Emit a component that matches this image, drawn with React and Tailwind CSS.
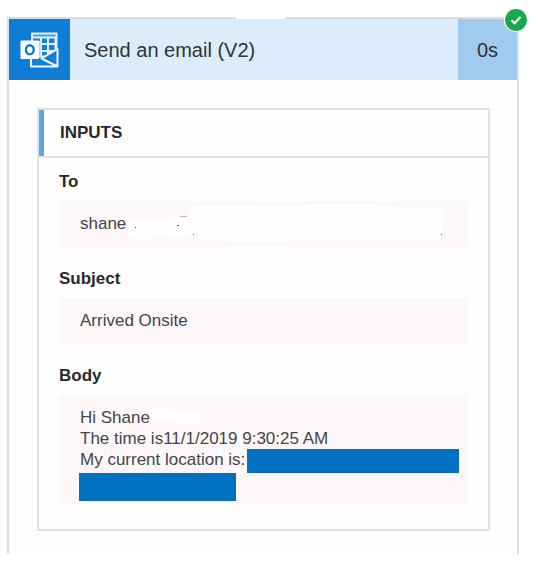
function OutlookIcon() {
  return (
    <svg viewBox="0 0 40 38" className="h-[38px] w-10" fill="none" aria-hidden="true">
      <rect x="11" y="1.500" width="26.500" height="25" rx="1" fill="#e4effb" />
      <path d="M13 3.500h22.500v2H13z" fill="#4c9ee2" />
      <path
        d="M13 7.500h7v2.500h-7z M22 7.500h5v4.500h-5z M29 7.500h5.500v4.500H29z M22 14h5v5h-5z M29 14h5.500v5H29z M22 21h5v3.500h-5z"
        fill="#1280d6"
      />
      <path d="M18.500 11h2v16h-2z" fill="#bcd3ea" />
      <path d="M10 28h12l15.500-9.500V36H10z" fill="#1280d6" />
      <path
        d="M11 27v8.500h26.500V18L21.500 27.500l16 8"
        stroke="#eef5fc"
        strokeWidth="2"
        strokeLinejoin="round"
      />
      <rect x="0.500" y="9.500" width="18.500" height="18.500" rx="1" fill="#fff" />
      <ellipse cx="9.800" cy="18.800" rx="3.900" ry="4.600" stroke="#1377c8" strokeWidth="2.400" />
    </svg>
  );
}

function Field({ label, children }) {
  return (
    <div>
      <dt className="text-[17px] leading-5 font-bold text-[#29292c]">{label}</dt>
      <dd className="relative mt-[9px] bg-[#fdf7f9] px-[21px] pt-3 text-[17px] leading-[21px] text-[#454548]">
        {children}
      </dd>
    </div>
  );
}

export default function App() {
  return (
    <main className="bg-white pt-[17px] pr-5 pb-3 pl-[7px] font-['Liberation_Sans',Arial,sans-serif]">
      <article className="relative border-x-2 border-t-2 border-[#dddde0] bg-[#fefefe] pb-[23px]">
        <header className="flex h-[61px] items-stretch bg-[#dcecfa]">
          <div className="flex w-[61px] items-center justify-center bg-[#0f7dd5]">
            <OutlookIcon />
          </div>
          <h1 className="flex flex-1 items-center pt-px pl-[14px] text-[20px] text-[#2e3338]">
            Send an email (V2)
          </h1>
          <div className="flex w-[59px] items-center justify-center bg-[#a0cbef] pt-px text-[20px] text-[#2e3338]">
            0s
          </div>
        </header>
        <span className="absolute -top-[19px] left-[227px] h-[19px] w-[49px] bg-white" />
        <svg
          viewBox="0 0 24 24"
          className="absolute -top-[11px] -right-[11px] size-6"
          fill="none"
          role="img"
          aria-label="Succeeded"
        >
          <circle cx="12" cy="12" r="12" fill="#fff" />
          <circle cx="12" cy="12" r="10.900" fill="#16a94b" />
          <path d="M7.500 12.300l3 3 6-6.300" stroke="#fff" strokeWidth="2.200" />
        </svg>

        <section className="mt-7 mr-[27px] ml-7 border-2 border-[#e1e1e4]">
          <h2 className="flex h-12 items-center border-b-2 border-b-[#e1e1e4] text-[17px] font-bold text-[#29292c]">
            <span className="mr-4 w-[5px] self-stretch bg-[#59a7df]" />
            INPUTS
          </h2>
          <dl className="flex flex-col gap-[22px] pt-[14px] pr-5 pb-[25px] pl-5">
            <Field label="To">
              <p className="pb-[13px]">shane</p>
              <svg
                className="absolute top-0 left-[66px] h-[45px] w-[322px]"
                viewBox="0 0 322 45"
                aria-hidden="true"
              >
                <path
                  d="M2 23l5-5h33l13-2 11-1 3-7 6-4h58l18 2h23l12-3h62l16 3 20 1h38v14l-3 3v14H231l-20 1-40-1h-7l-2 3H108l-10-3H68l-4-2-10 2-14-2-20 2H7l-5-5z"
                  fill="#fefefe"
                />
                <path d="M55 15.500h7" stroke="#bbb" />
                <path d="M10 26h1v1h-1zM52 24h2v1h-2zM68 33h1v1h-1zM316 33h1v1h-1z" fill="#465568" />
              </svg>
            </Field>
            <Field label="Subject">
              <p className="pb-[13px]">Arrived Onsite</p>
            </Field>
            <Field label="Body">
              <p>Hi Shane</p>
              <p>The time is11/1/2019 9:30:25 AM</p>
              <p className="-mr-4 flex whitespace-nowrap">
                My current location is:
                <span className="ml-0.5 h-6 w-[212px] bg-[#0070c0]" />
              </p>
              <div className="pb-[3px]">
                <div className="-ml-px h-7 w-[157px] bg-[#0070c0]" />
              </div>
              <svg
                className="absolute top-3 left-[90px] h-6 w-[58px]"
                viewBox="0 0 58 24"
                aria-hidden="true"
              >
                <path d="M0 2l9-2 17 3 12 3 14 1v10H34l-12-3-15-1-7-5z" fill="#fefefe" />
              </svg>
            </Field>
          </dl>
        </section>
      </article>
    </main>
  );
}
